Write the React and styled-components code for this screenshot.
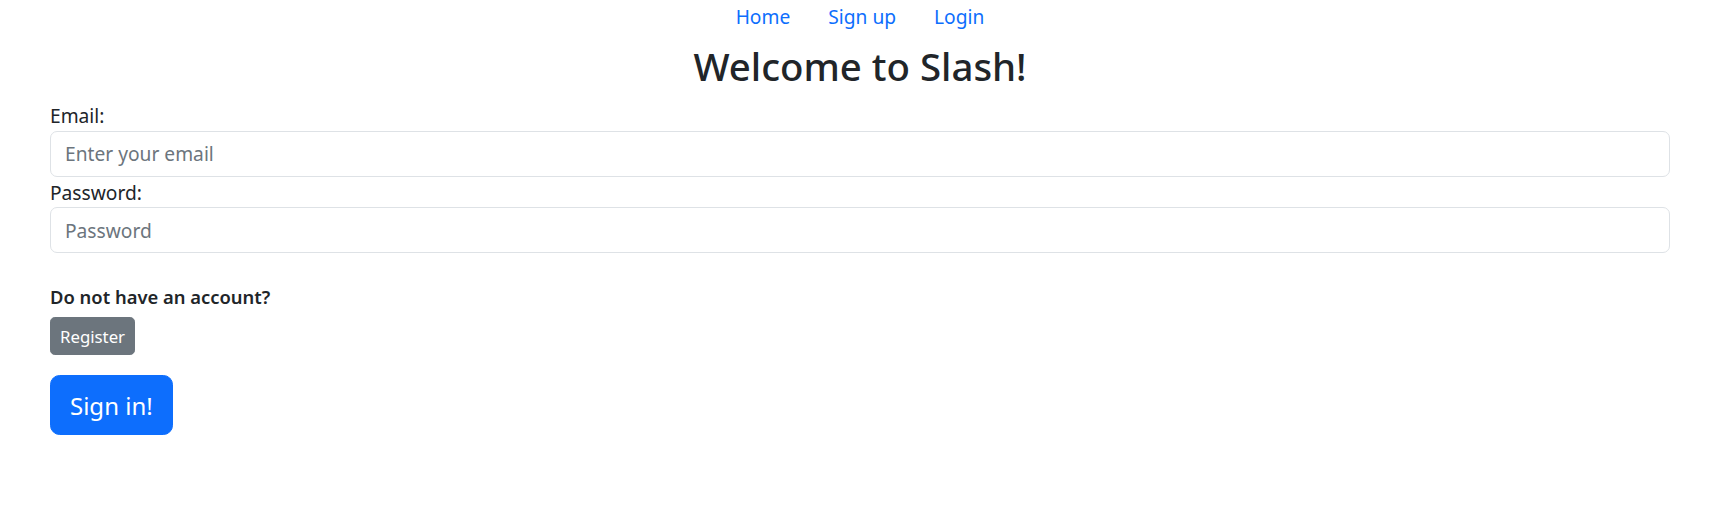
import React from "react";
import styled, { createGlobalStyle } from "styled-components";

const Global = createGlobalStyle`
  html, body { margin: 0; padding: 0; background: #fff; }
  body {
    font-family: "Noto Sans", "Open Sans", sans-serif;
    color: #212529;
    font-size: 19.2px;
    line-height: 1.5;
  }
  * { box-sizing: border-box; }
`;

const Page = styled.div`
  padding: 0 42px 0 50px;
`;

const Nav = styled.nav`
  display: flex;
  justify-content: center;
  padding-top: 3px;
`;

const NavLink = styled.a`
  color: #0d6efd;
  text-decoration: none;
  padding: 0 19px;
  font-size: 19.2px;
  line-height: 28.8px;
`;

const Title = styled.h2`
  margin: 11px 0 13px;
  text-align: center;
  font-size: 38.4px;
  font-weight: 500;
  line-height: 46px;
`;

const Form = styled.form`
  display: flex;
  flex-direction: column;
`;

const Group = styled.div`
  display: flex;
  flex-direction: column;
  margin-top: ${(p) => p.$gap || 0}px;
`;

const Label = styled.label`
  font-size: 19.2px;
  line-height: 28.8px;
`;

const Input = styled.input`
  display: block;
  width: 100%;
  height: 46px;
  padding: 7px 14px;
  font-family: inherit;
  font-size: 19.2px;
  color: #212529;
  border: 1px solid #dee2e6;
  border-radius: 7px;
  background: #fff;
  outline: none;
  &::placeholder { color: #6c757d; opacity: 1; }
`;

const Prompt = styled.h6`
  margin: 31px 0 0;
  font-size: 18.4px;
  font-weight: 600;
  line-height: 25px;
`;

const RegisterButton = styled.button`
  align-self: flex-start;
  margin-top: 8px;
  height: 38px;
  padding: 0 9px;
  font-family: inherit;
  font-size: 16.8px;
  color: #fff;
  background: #6c757d;
  border: 1px solid #6c757d;
  border-radius: 4.8px;
`;

const SubmitButton = styled.button`
  align-self: flex-start;
  margin-top: 20px;
  height: 60px;
  padding: 0 19px;
  font-family: inherit;
  font-size: 24px;
  color: #fff;
  background: #0d6efd;
  border: 1px solid #0d6efd;
  border-radius: 9.6px;
`;

export default function App() {
  return (
    <>
      <Global />
      <Page>
        <Nav>
          <NavLink href="#">Home</NavLink>
          <NavLink href="#">Sign up</NavLink>
          <NavLink href="#">Login</NavLink>
        </Nav>
        <Title>Welcome to Slash!</Title>
        <Form onSubmit={(e) => e.preventDefault()}>
          <Group>
            <Label htmlFor="email">Email:</Label>
            <Input id="email" type="email" placeholder="Enter your email" />
          </Group>
          <Group $gap={2}>
            <Label htmlFor="password">Password:</Label>
            <Input id="password" type="password" placeholder="Password" />
          </Group>
          <Prompt>Do not have an account?</Prompt>
          <RegisterButton type="button">Register</RegisterButton>
          <SubmitButton type="submit">Sign in!</SubmitButton>
        </Form>
      </Page>
    </>
  );
}
